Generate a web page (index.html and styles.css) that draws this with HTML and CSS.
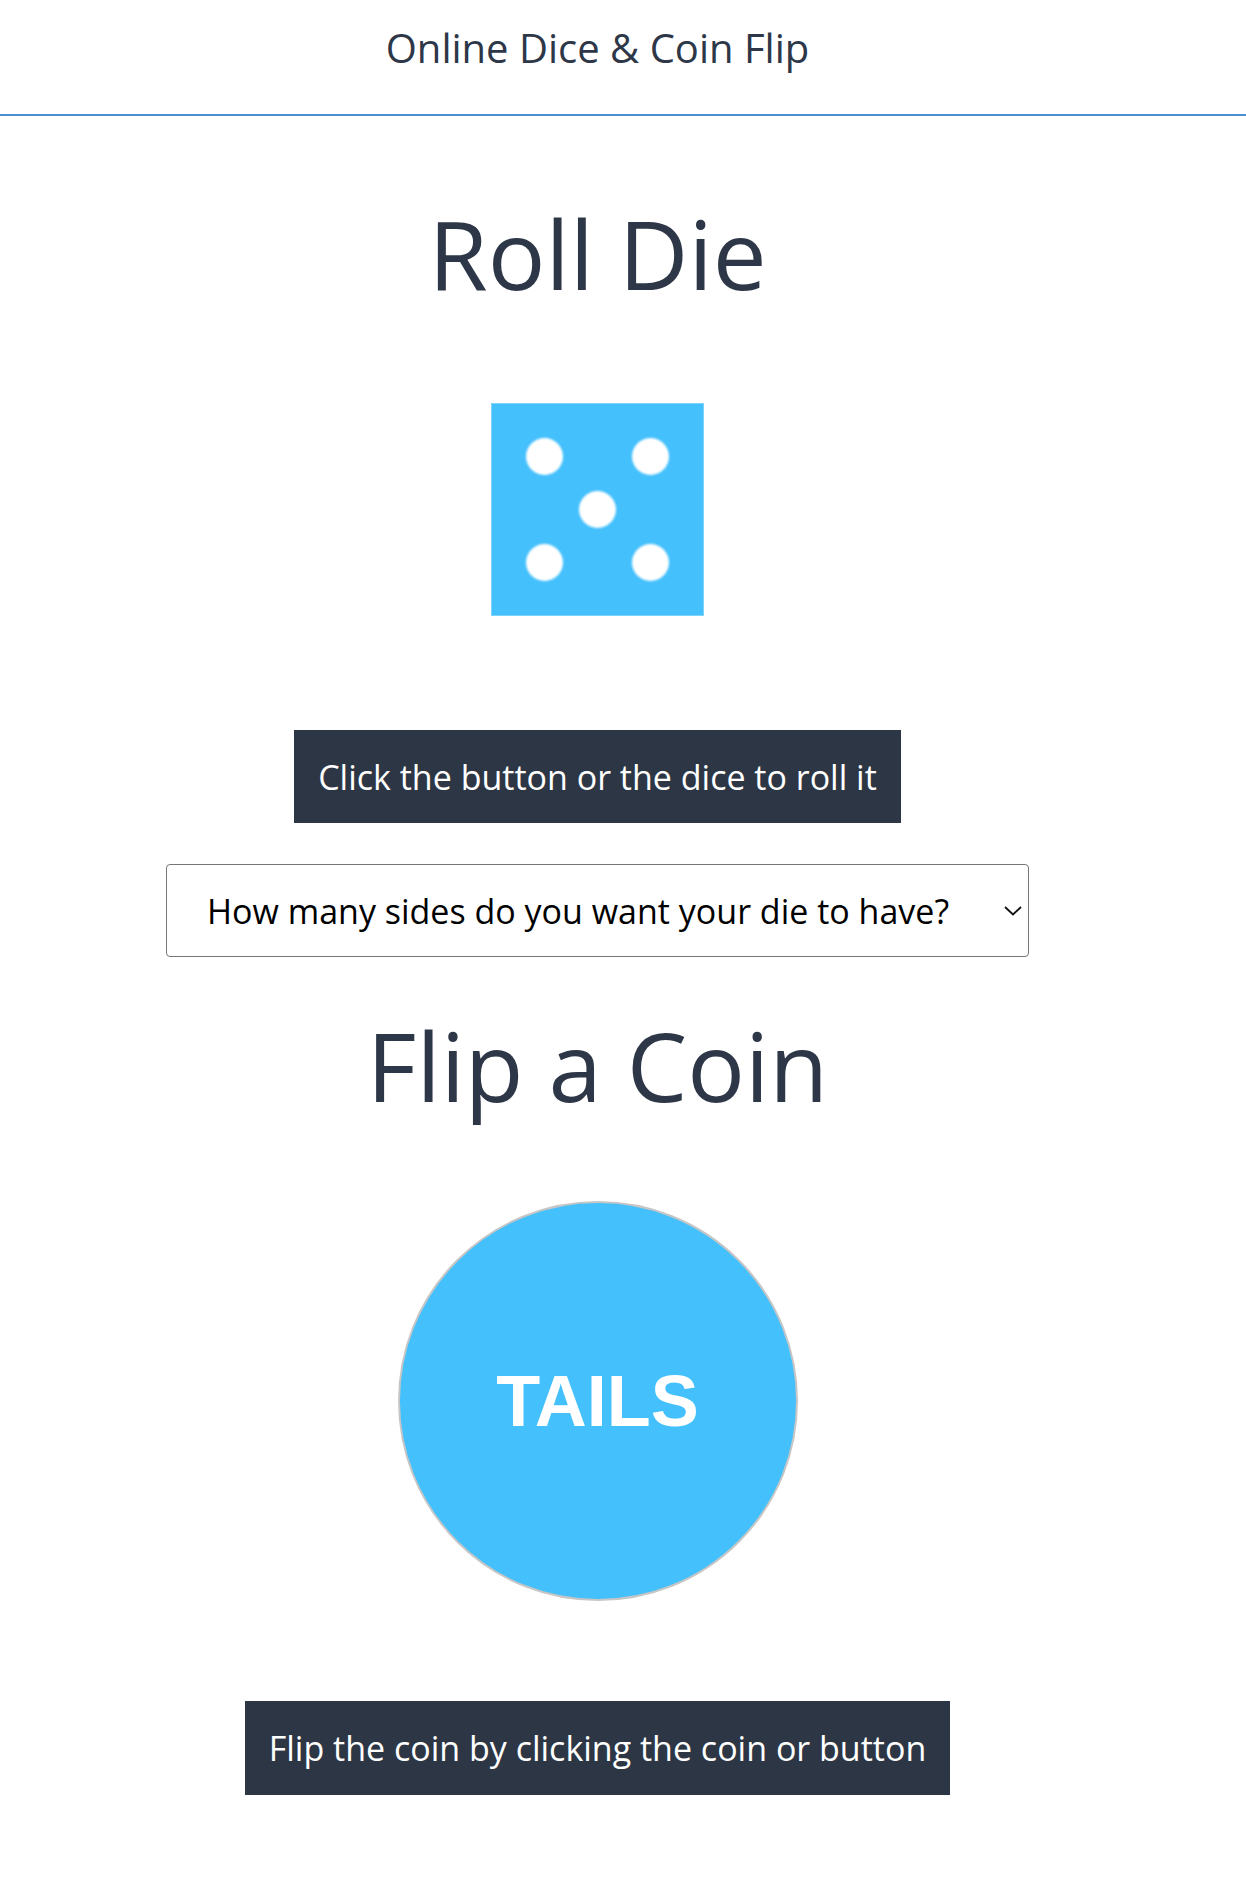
FILE: index.html
```html
<!DOCTYPE html>
<html lang="en">
<head>
    <meta charset="UTF-8">
    <meta name="viewport" content="width=device-width, initial-scale=1.0">
    <title>Online Dice &amp; Coin Flip</title>
    <link rel="stylesheet" href="styles.css">
</head>
<body>
    <!-- Header -->
    <header class="site-header">
        <div class="site-title">Online Dice &amp; Coin Flip</div>
    </header>

    <main class="content">
        <!-- Dice -->
        <h1 class="section-title title-die">Roll Die</h1>
        <div class="die" id="die">
            <span class="pip"></span><span></span><span class="pip"></span>
            <span></span><span class="pip"></span><span></span>
            <span class="pip"></span><span></span><span class="pip"></span>
        </div>
        <button class="action-button roll-button">Click the button or the dice to roll it</button>
        <div class="select-wrap">
            <select class="sides-select">
                <option>How many sides do you want your die to have?</option>
                <option>4</option>
                <option>6</option>
                <option>8</option>
                <option>10</option>
                <option>12</option>
                <option>20</option>
            </select>
            <svg class="select-arrow" width="18" height="10" viewBox="0 0 18 10">
                <path d="M1 1 L9 8.5 L17 1" fill="none" stroke="#111" stroke-width="1.8"/>
            </svg>
        </div>

        <!-- Coin -->
        <h1 class="section-title title-coin">Flip a Coin</h1>
        <div class="coin">TAILS</div>
        <button class="action-button flip-button">Flip the coin by clicking the coin or button</button>
    </main>
</body>
</html>
```

FILE: styles.css
```css
/* Reset */
html, body {
    margin: 0;
    padding: 0;
}

body {
    background: #fff;
    color: #2d3748;
    font-family: "Open Sans", Arial, sans-serif;
}

/* Header */
.site-header {
    box-sizing: border-box;
    height: 116px;
    padding-top: 20px;
    border-bottom: 2px solid #4a8fd6;
}

.site-title {
    width: 1195px;
    text-align: center;
    font-size: 40px;
}

/* Main column */
.content {
    width: 1195px;
    display: flex;
    flex-direction: column;
    align-items: center;
    padding-bottom: 60px;
}

.section-title {
    margin: 0;
    font-size: 96px;
    font-weight: 400;
    line-height: normal;
}

.title-die {
    margin-top: 71px;
}

.title-coin {
    margin-top: 42px;
}

/* Die */
.die {
    box-sizing: border-box;
    width: 213px;
    height: 213px;
    margin-top: 85px;
    padding: 26px;
    background: #44c0fc;
    border: 1px solid #7dd3fc;
    display: grid;
    grid-template-columns: repeat(3, 1fr);
    grid-template-rows: repeat(3, 1fr);
    place-items: center;
    cursor: pointer;
}

.pip {
    width: 37px;
    height: 37px;
    border-radius: 50%;
    background: #fff;
    filter: blur(0.8px);
}

/* Buttons */
.action-button {
    box-sizing: border-box;
    height: 93px;
    padding: 0 24px;
    border: none;
    background: #2d3644;
    color: #fff;
    font-family: "Open Sans", Arial, sans-serif;
    font-size: 34px;
    cursor: pointer;
}

.roll-button {
    margin-top: 114px;
}

.flip-button {
    height: 94px;
    margin-top: 100px;
}

/* Select */
.select-wrap {
    position: relative;
    margin-top: 41px;
}

.sides-select {
    box-sizing: border-box;
    width: 863px;
    height: 93px;
    padding: 0 0 0 40px;
    appearance: none;
    -webkit-appearance: none;
    background: #fff;
    border: 1px solid #767676;
    border-radius: 4px;
    color: #000;
    font-family: "Open Sans", Arial, sans-serif;
    font-size: 34px;
}

.select-arrow {
    position: absolute;
    right: 7px;
    top: 42px;
    pointer-events: none;
}

/* Coin */
.coin {
    box-sizing: border-box;
    width: 400px;
    height: 400px;
    margin-top: 71px;
    border-radius: 50%;
    border: 2px solid #c6c6c6;
    background: #44c0fc;
    color: #fff;
    display: flex;
    align-items: center;
    justify-content: center;
    font-family: "Liberation Sans", Arial, sans-serif;
    font-weight: 700;
    font-size: 72px;
    cursor: pointer;
}
```
